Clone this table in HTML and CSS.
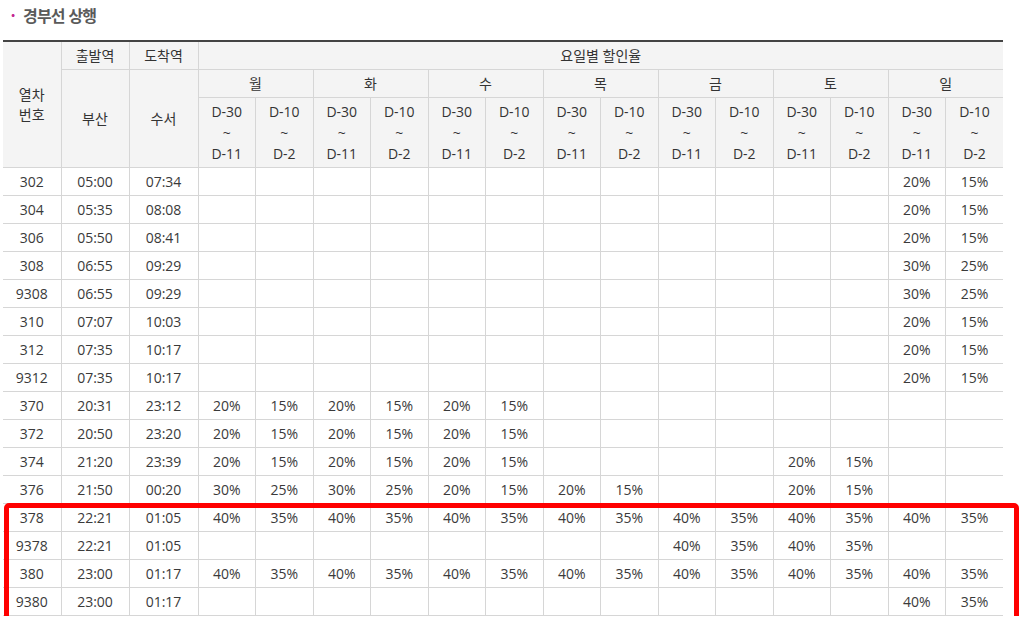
FILE: index.html
```html
<!DOCTYPE html>
<html lang="ko">
<head>
<meta charset="utf-8">
<title>경부선 상행</title>
<link rel="stylesheet" href="styles.css">
</head>
<body>
<div class="page">
  <h2 class="title"><span class="dot">·</span>경부선 상행</h2>
  <div class="table-wrap">
    <table class="fare">
      <colgroup>
        <col class="c-no"><col class="c-dep"><col class="c-arr">
        <col><col><col><col><col><col><col><col><col><col><col><col><col><col>
      </colgroup>
      <thead>
        <tr class="h1">
          <th rowspan="3">열차<br>번호</th>
          <th>출발역</th>
          <th>도착역</th>
          <th colspan="14">요일별 할인율</th>
        </tr>
        <tr class="h2">
          <th rowspan="2">부산</th>
          <th rowspan="2">수서</th>
          <th colspan="2">월</th>
          <th colspan="2">화</th>
          <th colspan="2">수</th>
          <th colspan="2">목</th>
          <th colspan="2">금</th>
          <th colspan="2">토</th>
          <th colspan="2">일</th>
        </tr>
        <tr class="h3">
          <th>D-30<br>~<br>D-11</th><th>D-10<br>~<br>D-2</th>
          <th>D-30<br>~<br>D-11</th><th>D-10<br>~<br>D-2</th>
          <th>D-30<br>~<br>D-11</th><th>D-10<br>~<br>D-2</th>
          <th>D-30<br>~<br>D-11</th><th>D-10<br>~<br>D-2</th>
          <th>D-30<br>~<br>D-11</th><th>D-10<br>~<br>D-2</th>
          <th>D-30<br>~<br>D-11</th><th>D-10<br>~<br>D-2</th>
          <th>D-30<br>~<br>D-11</th><th>D-10<br>~<br>D-2</th>
        </tr>
      </thead>
      <tbody>
        <tr><td>302</td><td>05:00</td><td>07:34</td><td></td><td></td><td></td><td></td><td></td><td></td><td></td><td></td><td></td><td></td><td></td><td></td><td>20%</td><td>15%</td></tr>
        <tr><td>304</td><td>05:35</td><td>08:08</td><td></td><td></td><td></td><td></td><td></td><td></td><td></td><td></td><td></td><td></td><td></td><td></td><td>20%</td><td>15%</td></tr>
        <tr><td>306</td><td>05:50</td><td>08:41</td><td></td><td></td><td></td><td></td><td></td><td></td><td></td><td></td><td></td><td></td><td></td><td></td><td>20%</td><td>15%</td></tr>
        <tr><td>308</td><td>06:55</td><td>09:29</td><td></td><td></td><td></td><td></td><td></td><td></td><td></td><td></td><td></td><td></td><td></td><td></td><td>30%</td><td>25%</td></tr>
        <tr><td>9308</td><td>06:55</td><td>09:29</td><td></td><td></td><td></td><td></td><td></td><td></td><td></td><td></td><td></td><td></td><td></td><td></td><td>30%</td><td>25%</td></tr>
        <tr><td>310</td><td>07:07</td><td>10:03</td><td></td><td></td><td></td><td></td><td></td><td></td><td></td><td></td><td></td><td></td><td></td><td></td><td>20%</td><td>15%</td></tr>
        <tr><td>312</td><td>07:35</td><td>10:17</td><td></td><td></td><td></td><td></td><td></td><td></td><td></td><td></td><td></td><td></td><td></td><td></td><td>20%</td><td>15%</td></tr>
        <tr><td>9312</td><td>07:35</td><td>10:17</td><td></td><td></td><td></td><td></td><td></td><td></td><td></td><td></td><td></td><td></td><td></td><td></td><td>20%</td><td>15%</td></tr>
        <tr><td>370</td><td>20:31</td><td>23:12</td><td>20%</td><td>15%</td><td>20%</td><td>15%</td><td>20%</td><td>15%</td><td></td><td></td><td></td><td></td><td></td><td></td><td></td><td></td></tr>
        <tr><td>372</td><td>20:50</td><td>23:20</td><td>20%</td><td>15%</td><td>20%</td><td>15%</td><td>20%</td><td>15%</td><td></td><td></td><td></td><td></td><td></td><td></td><td></td><td></td></tr>
        <tr><td>374</td><td>21:20</td><td>23:39</td><td>20%</td><td>15%</td><td>20%</td><td>15%</td><td>20%</td><td>15%</td><td></td><td></td><td></td><td></td><td>20%</td><td>15%</td><td></td><td></td></tr>
        <tr><td>376</td><td>21:50</td><td>00:20</td><td>30%</td><td>25%</td><td>30%</td><td>25%</td><td>20%</td><td>15%</td><td>20%</td><td>15%</td><td></td><td></td><td>20%</td><td>15%</td><td></td><td></td></tr>
        <tr><td>378</td><td>22:21</td><td>01:05</td><td>40%</td><td>35%</td><td>40%</td><td>35%</td><td>40%</td><td>35%</td><td>40%</td><td>35%</td><td>40%</td><td>35%</td><td>40%</td><td>35%</td><td>40%</td><td>35%</td></tr>
        <tr><td>9378</td><td>22:21</td><td>01:05</td><td></td><td></td><td></td><td></td><td></td><td></td><td></td><td></td><td>40%</td><td>35%</td><td>40%</td><td>35%</td><td></td><td></td></tr>
        <tr><td>380</td><td>23:00</td><td>01:17</td><td>40%</td><td>35%</td><td>40%</td><td>35%</td><td>40%</td><td>35%</td><td>40%</td><td>35%</td><td>40%</td><td>35%</td><td>40%</td><td>35%</td><td>40%</td><td>35%</td></tr>
        <tr><td>9380</td><td>23:00</td><td>01:17</td><td></td><td></td><td></td><td></td><td></td><td></td><td></td><td></td><td></td><td></td><td></td><td></td><td>40%</td><td>35%</td></tr>
      </tbody>
    </table>
    <div class="highlight"></div>
  </div>
</div>
</body>
</html>
```

FILE: styles.css
```css
html, body {
  margin: 0;
  padding: 0;
  background: #ffffff;
}

body {
  font-family: "Open Sans", "Noto Sans CJK KR", sans-serif;
  color: #333333;
  font-size: 14px;
}

.page {
  padding: 0 21px 0 3px;
}

.title {
  margin: 0;
  height: 40px;
  padding-top: 4px;
  box-sizing: border-box;
  font-family: "Noto Sans CJK KR", sans-serif;
  font-size: 16px;
  font-weight: 700;
  line-height: 22px;
  color: #5a5a5a;
  letter-spacing: -0.8px;
}

.title .dot {
  display: inline-block;
  width: 20px;
  text-align: center;
  color: #c2268f;
  font-weight: 700;
  letter-spacing: 0;
}

.table-wrap {
  position: relative;
  width: 1000px;
}

.fare {
  width: 1000px;
  table-layout: fixed;
  border-collapse: collapse;
  border-top: 2px solid #444444;
}

.fare .c-no { width: 58px; }
.fare .c-dep { width: 68px; }
.fare .c-arr { width: 69px; }

.fare th,
.fare td {
  border: 1px solid #d6d6d6;
  text-align: center;
  vertical-align: middle;
  padding: 0;
  font-weight: 400;
}

.fare th {
  background: #f4f4f4;
  font-family: "Open Sans", "Noto Sans CJK KR", sans-serif;
  color: #333333;
  line-height: 20px;
}

.fare tr > :first-child { border-left: none; }
.fare tr > :last-child { border-right: none; }
.fare .h2 > :first-child,
.fare .h3 > :first-child { border-left: 1px solid #d6d6d6; }

.fare .h1 th { height: 27px; }
.fare .h2 th { height: 27px; }
.fare .h3 th { height: 69px; line-height: 21px; }

.fare td {
  height: 27px;
  line-height: 20px;
  color: #3a3a3a;
}

.highlight {
  position: absolute;
  left: 1px;
  top: 463px;
  width: 1015px;
  height: 123px;
  box-sizing: border-box;
  border: 5px solid #ff0000;
  border-radius: 5px;
  pointer-events: none;
}
```
